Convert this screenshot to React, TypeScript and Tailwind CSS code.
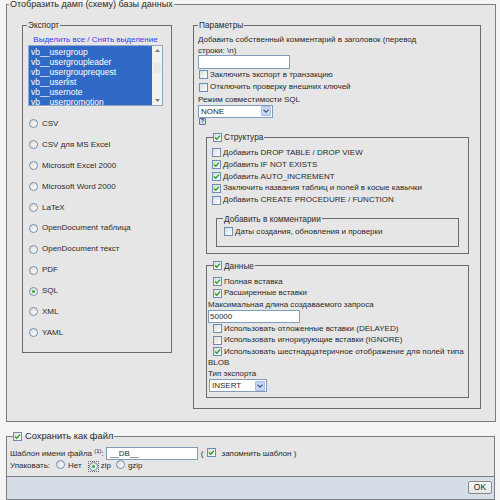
import React from 'react';

const Check = ({ checked = false }: { checked?: boolean }) => (
  <span className="inline-flex w-[9px] h-[9px] shrink-0 border border-[#6e8db3] bg-gradient-to-br from-[#dcdcd6] to-white items-center justify-center">
    {checked && (
      <svg width="7" height="7" viewBox="0 0 7 7">
        <path d="M1 3.4 L2.8 5.2 L6 1.6" fill="none" stroke="#21a121" strokeWidth="1.4" />
      </svg>
    )}
  </span>
);

const Radio = ({ checked = false, focus = false }: { checked?: boolean; focus?: boolean }) => (
  <span className={`inline-flex shrink-0 items-center justify-center ${focus ? 'outline outline-1 outline-dotted outline-[#666]' : ''}`}>
    <span className="inline-flex w-[9px] h-[9px] rounded-full border border-[#6e8db3] bg-gradient-to-br from-[#dcdcd6] to-white items-center justify-center">
      {checked && <span className="w-[3px] h-[3px] rounded-full bg-[#2fae2f]" />}
    </span>
  </span>
);

const Select = ({ value, w }: { value: string; w: string }) => (
  <div className={`flex h-[13px] ${w} border border-[#7f9db9] bg-white items-center`}>
    <span className="flex-1 pl-[2px] leading-[11px]">{value}</span>
    <span className="w-[10px] h-[10px] mr-[1px] rounded-[1px] border border-[#a9bde4] bg-[#c7d7f6] flex items-center justify-center">
      <svg width="6" height="4" viewBox="0 0 6 4">
        <path d="M0.5 0.8 L3 3.2 L5.5 0.8" fill="none" stroke="#4d6185" strokeWidth="1.2" />
      </svg>
    </span>
  </div>
);

const CheckRow = ({ checked, label, h = 'h-[12px]' }: { checked?: boolean; label: string; h?: string }) => (
  <div className={`flex items-center gap-[2px] ${h} whitespace-nowrap`}>
    <Check checked={checked} />
    <span>{label}</span>
  </div>
);

const formats = [
  'CSV',
  'CSV для MS Excel',
  'Microsoft Excel 2000',
  'Microsoft Word 2000',
  'LaTeX',
  'OpenDocument таблица',
  'OpenDocument текст',
  'PDF',
  'SQL',
  'XML',
  'YAML',
];

const tables = [
  'vb__usergroup',
  'vb__usergroupleader',
  'vb__usergrouprequest',
  'vb__userlist',
  'vb__usernote',
  'vb__userpromotion',
];

export default function App() {
  return (
    <div className="w-[500px] h-[500px] overflow-hidden bg-[#f4f4f4] pl-[6px] text-[8px] text-[#2a2a2a] font-['Liberation_Sans',Arial,sans-serif]">
      {/* Dump */}
      <fieldset className="w-[490px] -mt-[1px] border border-[#7d7d7d] bg-[#e6e6e6] pb-[12px]">
        <legend className="ml-[2px] px-[1px] h-[10px] leading-[10px] text-[9px]">Отобразить дамп (схему) базы данных</legend>

        <div className="flex items-start pl-[15px] mt-[11px] gap-[21px]">
          {/* Export */}
          <fieldset className="w-[150px] border border-[#6b6b6b] pb-[9px]">
            <legend className="ml-[4px] px-[1px] h-[10px] leading-[10px] text-[8.3px]">Экспорт</legend>
            <div className="ml-[5px] w-[135px]">
              <div className="mt-[5px] h-[10px] leading-[10px] text-center text-[#3a3aee] whitespace-nowrap">Выделить все / Снять выделение</div>
              <div className="flex h-[61px] border border-[#8fa6c6] text-[8.5px]">
                <div className="flex-1 bg-[#3169c6] text-white pt-[0.5px]">
                  {tables.map(t => (
                    <div key={t} className="h-[10px] leading-[10px] pl-[2px]">{t}</div>
                  ))}
                </div>
                <div className="w-[10px] bg-[#f1f1ed] flex flex-col items-center justify-between py-[3px]">
                  <svg width="5" height="3" viewBox="0 0 5 3"><path d="M0 3 L2.5 0 L5 3 Z" fill="#7c7c7c" /></svg>
                  <div className="w-[8px] h-[12px] mt-[10px] bg-[#e9e9e4] border border-[#eeeeea]" />
                  <div className="flex-1" />
                  <svg width="5" height="3" viewBox="0 0 5 3"><path d="M0 0 L2.5 3 L5 0 Z" fill="#7c7c7c" /></svg>
                </div>
              </div>
            </div>
            <div className="mt-[7.5px] pl-[6px]">
              {formats.map(f => (
                <div key={f} className="flex items-center gap-[4px] h-[20.9px]">
                  <Radio checked={f === 'SQL'} />
                  <span>{f}</span>
                </div>
              ))}
            </div>
          </fieldset>

          {/* Options */}
          <fieldset className="w-[288px] border border-[#6b6b6b] pb-[10px]">
            <legend className="ml-[4px] px-[1px] h-[10px] leading-[10px] text-[8.3px]">Параметры</legend>
            <div className="pl-[4px] pr-[11px]">
              <div className="mt-[4px] leading-[11px]">Добавить собственный комментарий в заголовок (перевод<br />строки: \n)</div>
              <div className="mt-[-1px] w-[92px] h-[14px] border border-[#7f9db9] bg-white" />
              <div className="pl-[1px] mt-[-0.5px]">
                <CheckRow label="Заключить экспорт в транзакцию" h="h-[12.5px]" />
                <CheckRow label="Отключить проверку внешних ключей" h="h-[12.5px]" />
              </div>
              <div className="h-[11px] leading-[11px]">Режим совместимости SQL</div>
              <Select value="NONE" w="w-[75px]" />
              <div className="mt-[0.5px] ml-[1px] w-[7px] h-[7px] border border-[#5a76a6] bg-[#d8e0f0] rounded-[1px] text-[5.5px] leading-[5px] text-center text-[#33457a] font-bold">?</div>
            </div>

            {/* Structure */}
            <fieldset className="ml-[12px] w-[263px] mt-[7px] border border-[#6b6b6b] pb-[6px]">
              <legend className="ml-[6px] pr-[1px] h-[10px] flex items-center gap-[2px]">
                <Check checked />
                <span className="text-[8.3px] leading-[10px]">Структура</span>
              </legend>
              <div className="mt-[5px] pl-[5px]">
                <CheckRow label="Добавить DROP TABLE / DROP VIEW" h="h-[11.8px]" />
                <CheckRow checked label="Добавить IF NOT EXISTS" h="h-[11.8px]" />
                <CheckRow checked label="Добавить AUTO_INCREMENT" h="h-[11.8px]" />
                <CheckRow checked label="Заключить названия таблиц и полей в косые кавычки" h="h-[11.8px]" />
                <CheckRow label="Добавить CREATE PROCEDURE / FUNCTION" h="h-[11.8px]" />
              </div>
              <fieldset className="ml-[9px] w-[243px] mt-[8px] border border-[#6b6b6b] pb-[8px]">
                <legend className="ml-[6px] px-[1px] h-[10px] leading-[10px] text-[8.3px]">Добавить в комментарии</legend>
                <div className="mt-[2px] pl-[7px]">
                  <CheckRow label="Даты создания, обновления и проверки" />
                </div>
              </fieldset>
            </fieldset>

            {/* Data */}
            <fieldset className="ml-[12px] w-[263px] mt-[7px] border border-[#6b6b6b] pb-[5px]">
              <legend className="ml-[6px] pr-[1px] h-[10px] flex items-center gap-[2px]">
                <Check checked />
                <span className="text-[8.3px] leading-[10px]">Данные</span>
              </legend>
              <div className="mt-[5px] pl-[1px]">
                <div className="pl-[5px]">
                  <CheckRow checked label="Полная вставка" h="h-[11.5px]" />
                  <CheckRow checked label="Расширенные вставки" h="h-[11.5px]" />
                </div>
                <div className="h-[11px] leading-[11px]">Максимальная длина создаваемого запроса</div>
                <div className="w-[92px] h-[13px] border border-[#7f9db9] bg-white pl-[1px] leading-[11px]">50000</div>
                <div className="pl-[5px]">
                  <CheckRow label="Использовать отложенные вставки (DELAYED)" h="h-[11.5px]" />
                  <CheckRow label="Использовать игнорирующие вставки (IGNORE)" h="h-[11.5px]" />
                  <CheckRow checked label="Использовать шестнадцатеричное отображение для полей типа" h="h-[11.5px]" />
                </div>
                <div className="h-[11px] leading-[11px]">BLOB</div>
                <div className="h-[11px] leading-[11px]">Тип экспорта</div>
                <div className="ml-[1px]">
                  <Select value="INSERT" w="w-[58px]" />
                </div>
              </div>
            </fieldset>
          </fieldset>
        </div>
      </fieldset>

      {/* Save as file */}
      <fieldset className="w-[489px] mt-[8px] border border-[#7d7d7d] bg-[#e6e6e6] pb-[4px]">
        <legend className="ml-[6px] pr-[1px] h-[12px] flex items-center gap-[3px]">
          <Check checked />
          <span className="text-[9.3px] leading-[12px]">Сохранить как файл</span>
        </legend>
        <div className="pl-[3px] mt-[5px]">
          <div className="flex items-center h-[13px] whitespace-nowrap">
            <span>Шаблон имени файла <sup className="text-[6px]">(1)</sup>:</span>
            <div className="ml-[2px] w-[92px] h-[13px] border border-[#7f9db9] bg-white pl-[3px] leading-[11px]">__DB__</div>
            <span className="ml-[3px]">(</span>
            <span className="ml-[4px]"><Check checked /></span>
            <span className="ml-[5px]">запомнить шаблон )</span>
          </div>
          <div className="flex items-center h-[12px] whitespace-nowrap">
            <span>Упаковать:</span>
            <span className="ml-[6px]"><Radio /></span>
            <span className="ml-[3px]">Нет</span>
            <span className="ml-[7px]"><Radio checked focus /></span>
            <span className="ml-[3px]">zip</span>
            <span className="ml-[5px]"><Radio /></span>
            <span className="ml-[3px]">gzip</span>
          </div>
        </div>
      </fieldset>
      <div className="w-[489px] h-[23px] bg-[#d5dde6] border-x border-b border-[#7d7d7d] flex justify-end items-start pt-[4px] pr-[2px]">
        <button className="w-[24px] h-[13px] border border-[#8a8a8a] bg-gradient-to-b from-[#fafafa] to-[#e4e4e4] rounded-[2px] text-[8.5px] leading-[11px] text-[#222]">OK</button>
      </div>
    </div>
  );
}
